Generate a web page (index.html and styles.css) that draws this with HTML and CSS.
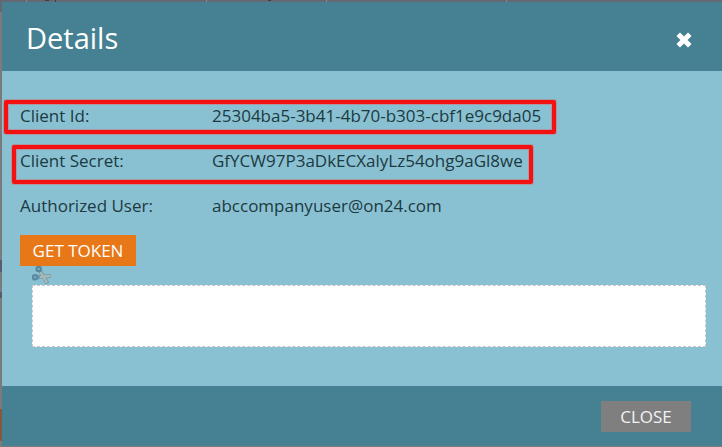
FILE: index.html
```
<!DOCTYPE html>
<html lang="en">
<head>
<meta charset="utf-8">
<title>Details</title>
<link rel="stylesheet" href="styles.css">
</head>
<body>
<main class="dialog" role="dialog" aria-labelledby="dialog-title">
  <header class="dialog-header">
    <h1 id="dialog-title">Details</h1>
    <button class="icon-button" type="button" aria-label="Close dialog">
      <svg width="18" height="18" viewBox="0 0 18 18" aria-hidden="true"><path d="M3.2 3.2 14.8 14.8M14.8 3.2 3.2 14.8" fill="none" stroke="#fff" stroke-width="5"/></svg>
    </button>
  </header>
  <section class="dialog-body">
    <dl class="details">
      <div class="row row-id"><dt>Client Id:</dt><dd>25304ba5-3b41-4b70-b303-cbf1e9c9da05</dd></div>
      <div class="row row-secret"><dt>Client Secret:</dt><dd>GfYCW97P3aDkECXalyLz54ohg9aGl8we</dd></div>
      <div class="row"><dt>Authorized User:</dt><dd>abccompanyuser@on24.com</dd></div>
    </dl>
    <button class="button button-primary" type="button">GET TOKEN</button>
    <div class="coupon">
      <svg class="scissors" width="20" height="19" viewBox="0 0 20 19" aria-hidden="true">
        <path d="M8 5 15.5 17.5M5 11 19 10" fill="none" stroke="#7799a3" stroke-width="4"/>
        <path d="M8.5 6 15 16.8M8 11 18.5 10" fill="none" stroke="#a6b9bb" stroke-width="2.4"/>
        <circle cx="6.7" cy="3" r="2.3" fill="#79a9bb" stroke="#5688a0" stroke-width="2"/>
        <circle cx="3" cy="11.2" r="2.3" fill="#79a9bb" stroke="#5688a0" stroke-width="2"/>
      </svg>
      <textarea class="token" aria-label="Token" readonly></textarea>
    </div>
  </section>
  <footer class="dialog-footer">
    <button class="button button-neutral" type="button">CLOSE</button>
  </footer>
</main>
</body>
</html>
```
FILE: styles.css
```
*, *::after { box-sizing: border-box; }

html { height: 100%; }

body {
  display: flex;
  min-height: 100%;
  margin: 0;
  padding: 2px 0 1px 2px;
  font-family: "Open Sans", "Noto Sans", sans-serif;
  color: #1d3940;
  /* Dimmed page behind the dialog: row edge, header dividers, left rail */
  background:
    linear-gradient(#84583a, #84583a) 0 409px / 2px 32px no-repeat,
    linear-gradient(#5a5b6d, #5a5b6d) 0 260px / 2px 12px no-repeat,
    linear-gradient(#5a5b6d, #5a5b6d) 0 292px / 2px 6px no-repeat,
    linear-gradient(#3d3e45, #3d3e45) 45px 0 / 4px 1px no-repeat,
    linear-gradient(#3d3e45, #3d3e45) 55px 0 / 1px 2px no-repeat,
    linear-gradient(#3d3e45, #3d3e45) 268px 0 / 3px 1px no-repeat,
    linear-gradient(#8f8889, #8f8889) 26px 0 / 1px 2px no-repeat,
    linear-gradient(#8f8889, #8f8889) 206px 0 / 1px 2px no-repeat,
    linear-gradient(#8f8889, #8f8889) 326px 0 / 1px 2px no-repeat,
    linear-gradient(#8f8889, #8f8889) 506px 0 / 1px 2px no-repeat,
    linear-gradient(#646872, #646872) 0 0 / 100% 12px no-repeat,
    #7b7b7d;
}

.dialog {
  flex: 1;
  display: flex;
  flex-direction: column;
  background: #89c1d3;
}

.dialog-header {
  display: flex;
  align-items: center;
  justify-content: space-between;
  padding: 16px 29px 13px 24px;
  background: #468193;
}

h1 {
  margin: 0;
  font-size: 29px;
  line-height: 40px;
  font-weight: 400;
  color: #fff;
}

.icon-button {
  display: flex;
  margin-top: 3px;
  padding: 0;
  border: 0;
  background: none;
}

.dialog-body {
  flex: 1;
  padding: 22px 16px 39px 18px;
}

.details { margin: 0 0 7px; }

.row {
  position: relative;
  display: grid;
  grid-template-columns: 192px 1fr;
  font-size: 17px;
  line-height: 45px;
  font-weight: 400;
}

dd { margin: 0; }

.row-id::after,
.row-secret::after {
  content: "";
  position: absolute;
  border: 4px solid #f41111;
  border-radius: 2px;
  box-shadow: 0 0 0 1px #a899a5, inset 0 0 0 1px #a899a5;
}

.row-id::after { left: -16px; top: 7px; width: 552px; height: 34px; }
.row-secret::after { left: -8px; top: 7px; width: 521px; height: 39px; }

.button {
  display: block;
  height: 31px;
  padding: 0;
  border: 0;
  font-family: inherit;
  font-size: 17px;
  line-height: 31px;
  color: #fff;
}

.button-primary { width: 116px; background: #e87718; }
.button-neutral { width: 90px; background: #7f7f7f; color: #f2f2f2; }

.coupon { padding-left: 12px; }

.scissors { display: block; }

.token {
  display: block;
  width: 100%;
  height: 62px;
  border: 1px dashed #c8c8c8;
  background: #fff;
  resize: none;
}

.dialog-footer {
  display: flex;
  justify-content: flex-end;
  padding: 15px 31px 14px;
  background: #468193;
}
```
